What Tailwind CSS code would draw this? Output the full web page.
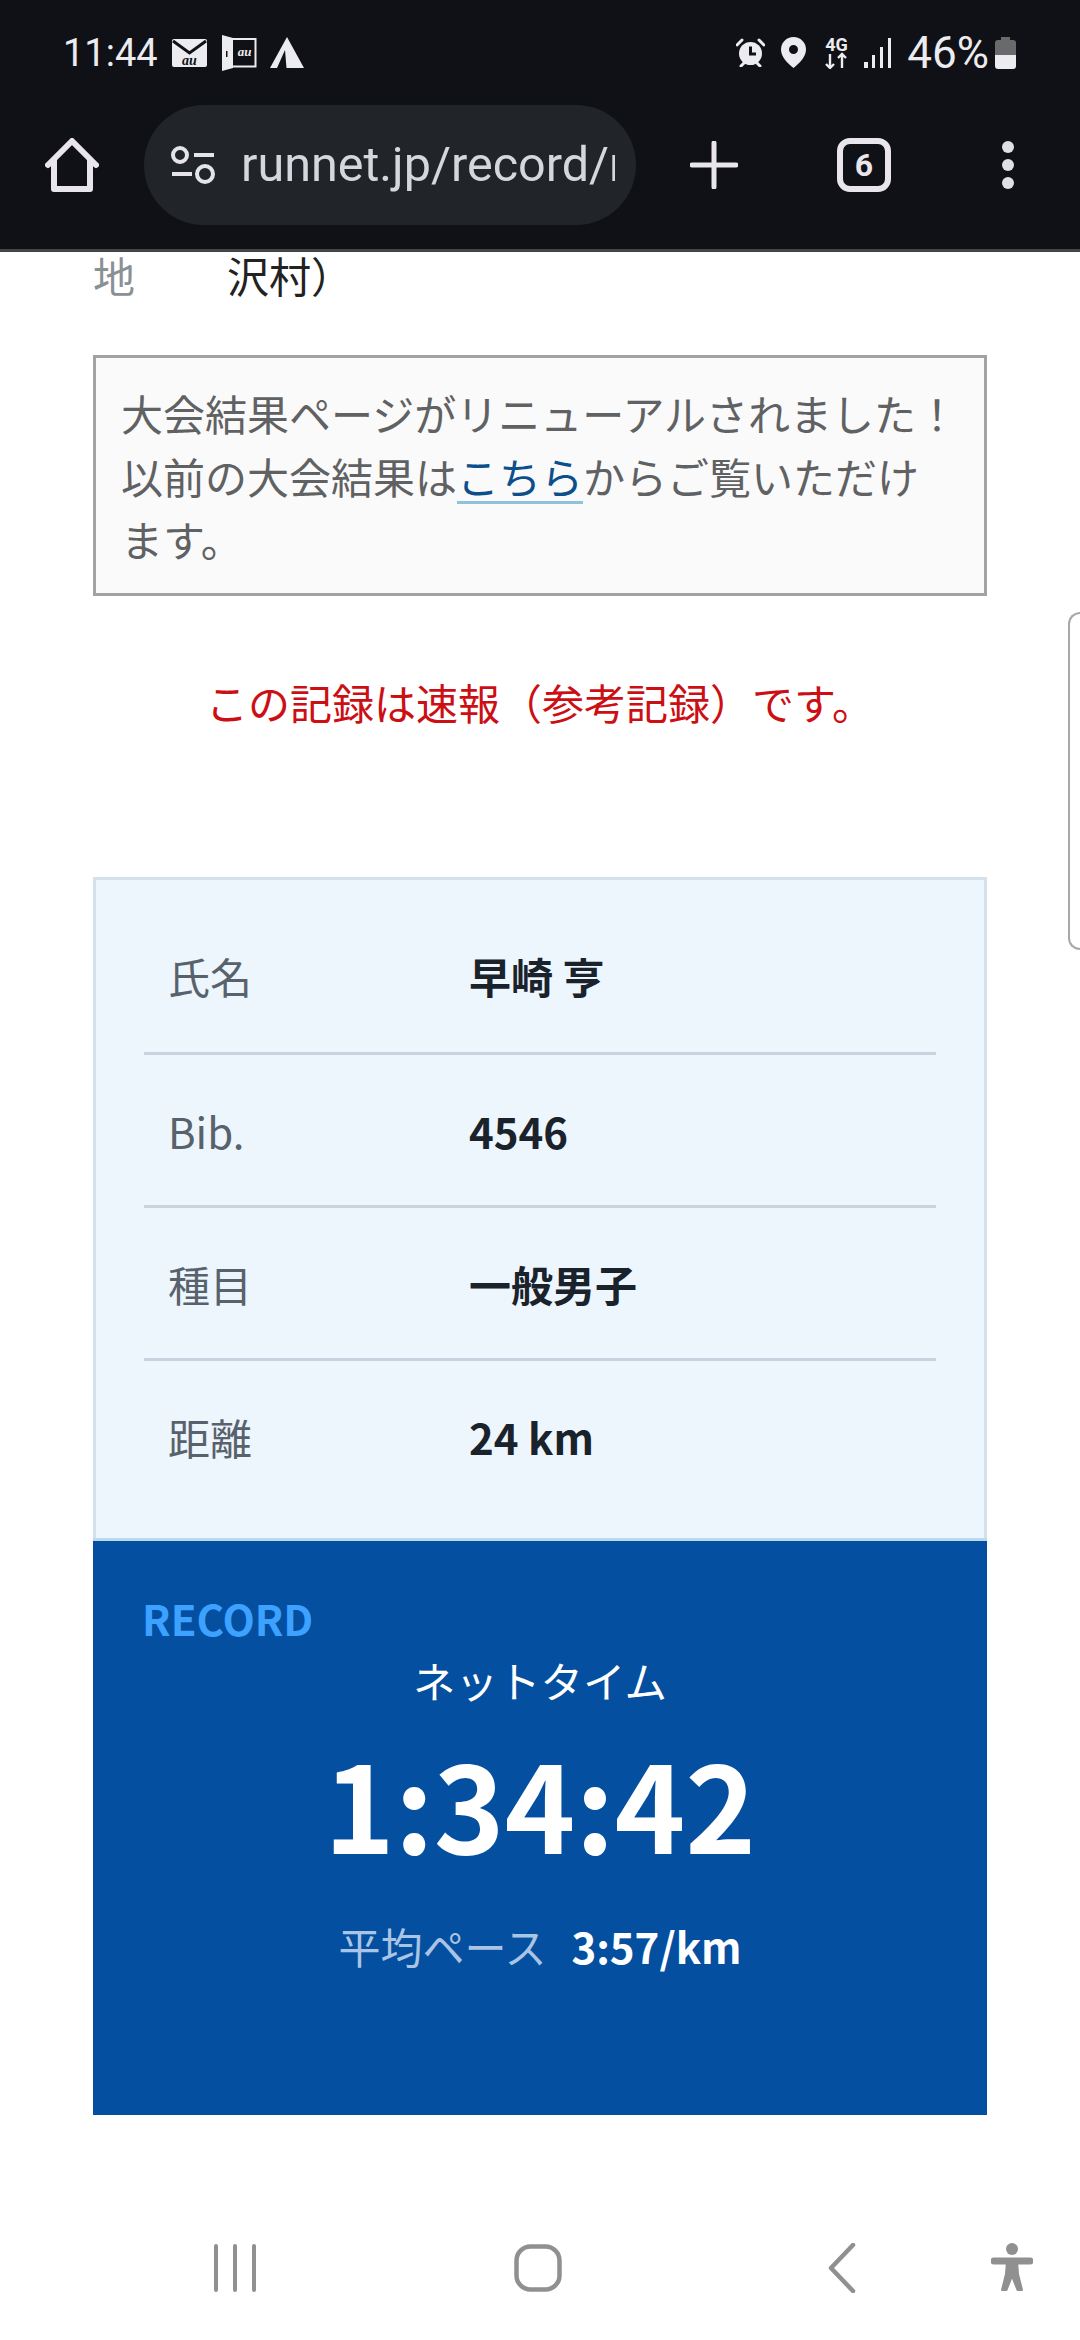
<!DOCTYPE html>
<html lang="ja">
<head>
  <meta charset="UTF-8" />
  <meta name="viewport" content="width=device-width, initial-scale=1.0"/>
  <title>大会結果</title>
  <script src="https://cdn.jsdelivr.net/npm/@tailwindcss/browser@4"></script>
</head>
<body class="relative flex h-[2340px] w-[1080px] flex-col overflow-hidden bg-white font-['Noto_Sans_CJK_JP','Noto_Sans',sans-serif]">

  <!-- Browser chrome -->
  <header class="shrink-0 border-b-[3px] border-[#454545] bg-[#101116] font-['Roboto',sans-serif] text-[#ececf0]">
    <!-- Status bar -->
    <div class="flex h-[105px] items-center justify-between pl-[63px] pr-[64px]">
      <div class="flex items-center">
        <span class="text-[38px] leading-none">11:44</span>
        <svg class="ml-[14px]" width="35" height="28" viewBox="0 0 35 28"><path d="M2 0H33a2 2 0 0 1 2 2V26a2 2 0 0 1-2 2H2a2 2 0 0 1-2-2V2a2 2 0 0 1 2-2Z" fill="#ececf0"/><path d="M1 2 17.500 14 34 2" fill="none" stroke="#101116" stroke-width="3"/><text x="17.500" y="26" text-anchor="middle" font-family="Liberation Serif" font-style="italic" font-weight="700" font-size="14" fill="#101116">au</text></svg>
        <svg class="ml-[15px]" width="35" height="36" viewBox="0 0 35 36"><path d="M0 0 11 3V33L0 36Z" fill="#ececf0"/><path d="M11 4H33.500V31.500H11" fill="none" stroke="#ececf0" stroke-width="2"/><rect x="4" y="16" width="1.500" height="6" fill="#101116"/><text x="22.500" y="21" text-anchor="middle" font-family="Liberation Serif" font-style="italic" font-weight="700" font-size="13" fill="#ececf0">au</text></svg>
        <svg class="ml-[13px]" width="34" height="31" viewBox="0 0 34 31"><path d="M17 0 34 31H16.500L15 13 7 31H0Z" fill="#ececf0"/></svg>
      </div>
      <div class="flex items-center">
        <svg width="29" height="29" viewBox="0 0 29 29"><circle cx="14.500" cy="15.500" r="11.500" fill="#ececf0"/><path d="M1 7 6 2M23 2 28 7M5 28l3-3M24 28l-3-3" stroke="#ececf0" stroke-width="3" stroke-linecap="round"/><path d="M14.500 8.500V16H20" fill="none" stroke="#101116" stroke-width="3"/></svg>
        <svg class="ml-[16px]" width="25" height="31" viewBox="0 0 25 31"><path fill-rule="evenodd" d="M12.500 0C19.500 0 25 5.500 25 12.500 25 20 18 26.500 12.500 31 7 26.500 0 20 0 12.500 0 5.500 5.500 0 12.500 0Zm0 8a4.500 4.500 0 1 0 0 9 4.500 4.500 0 0 0 0-9Z" fill="#ececf0"/></svg>
        <svg class="ml-[18px]" width="25" height="33" viewBox="0 0 25 33"><text x="12.500" y="15" text-anchor="middle" font-family="Roboto" font-weight="700" font-size="18" fill="#ececf0">4G</text><path d="M6 18V32M2 28l4 4 4-4M18 32V18M14 22l4-4 4 4" fill="none" stroke="#ececf0" stroke-width="2.400"/></svg>
        <svg class="ml-[15px]" width="28" height="30" viewBox="0 0 28 30"><g fill="#ececf0"><rect x="0" y="24" width="4" height="6"/><rect x="8" y="17" width="3" height="13"/><rect x="16" y="9" width="3" height="21"/><rect x="24" y="0" width="3" height="30"/></g></svg>
        <span class="ml-[15px] text-[44px] leading-none">46%</span>
        <svg class="ml-[6px]" width="21" height="32" viewBox="0 0 21 32"><path d="M6 0H15V3H18a3 3 0 0 1 3 3V18H0V6a3 3 0 0 1 3-3H6Z" fill="#6a6a6c"/><path d="M0 18H21V29a3 3 0 0 1-3 3H3a3 3 0 0 1-3-3Z" fill="#ececf0"/></svg>
      </div>
    </div>

    <!-- Address bar -->
    <div class="flex h-[120px] items-center pl-[45px]">
      <svg width="54" height="54" viewBox="0 0 54 54"><path d="M3 27 27 3 51 27M9 22V51H45V22" fill="none" stroke="#e8e6ec" stroke-width="6" stroke-linecap="round" stroke-linejoin="round"/></svg>
      <div class="ml-[45px] flex h-[120px] w-[492px] items-center rounded-full bg-[#212429] pl-[26px]">
        <svg width="46" height="40" viewBox="0 0 46 40"><g fill="none" stroke="#e4e4ea" stroke-width="4"><circle cx="10" cy="10" r="7"/><circle cx="35" cy="29" r="8"/><path d="M24 10H44M2 29H22"/></g></svg>
        <div class="ml-[25px] w-[374px] overflow-hidden whitespace-nowrap text-[48.500px] leading-[60px] text-[#d6d7dd]">runnet.jp/record/race</div>
      </div>
      <svg class="ml-[54px]" width="48" height="48" viewBox="0 0 48 48"><path d="M24 2V46M2 24H46" stroke="#e8e6ec" stroke-width="5" stroke-linecap="round"/></svg>
      <div class="ml-[99px] flex h-[54px] w-[54px] items-center justify-center rounded-[13px] border-[6px] border-[#e8e6ec] text-[32px] font-bold leading-none text-[#e8e6ec]">6</div>
      <div class="ml-[111px] flex flex-col gap-[6px]">
        <span class="size-[12px] rounded-full bg-[#e0dfe4]"></span>
        <span class="size-[12px] rounded-full bg-[#e0dfe4]"></span>
        <span class="size-[12px] rounded-full bg-[#e0dfe4]"></span>
      </div>
    </div>
    <div class="h-[24px]"></div>
  </header>

  <!-- Page content -->
  <main class="min-h-0 flex-1 overflow-hidden px-[93px]">
    <div class="flex text-[42px] leading-[46px]">
      <span class="w-[134px] text-[#8a9194]">地</span>
      <span class="text-[#222]">沢村）</span>
    </div>

    <div class="mt-[57px] border-[3px] border-[#a3a3a3] bg-[#fafafa] py-[23px] pl-[25px] pr-[20px] text-[42px] leading-[63px] text-[#5f6163]">
      大会結果ページがリニューアルされました！<br>以前の大会結果は<a href="#" class="text-[#0b4f8c] underline decoration-[#8fc3dc] decoration-[3px] underline-offset-[7px]">こちら</a>からご覧いただけ<br>ます。
    </div>

    <p class="mt-[82px] text-center text-[42px] leading-[48px] text-[#cc0f14]">この記録は速報（参考記録）です。</p>

    <section class="mt-[151px]">
      <dl class="border-[3px] border-b-0 border-[#d3e1ec] bg-[#edf5fd] px-[48px] pt-[1px] text-[42px]">
        <div class="flex h-[174px] items-center border-b-[3px] border-[#c9d3e0] pl-[24px] pt-[18px]">
          <dt class="w-[301px] text-[#58626c]">氏名</dt>
          <dd class="font-bold text-[#1a222b]">早崎 亨</dd>
        </div>
        <div class="flex h-[153px] items-center border-b-[3px] border-[#c9d3e0] pl-[24px]">
          <dt class="w-[301px] text-[#58626c]">Bib.</dt>
          <dd class="font-bold text-[#1a222b]">4546</dd>
        </div>
        <div class="flex h-[153px] items-center border-b-[3px] border-[#c9d3e0] pl-[24px]">
          <dt class="w-[301px] text-[#58626c]">種目</dt>
          <dd class="font-bold text-[#1a222b]">一般男子</dd>
        </div>
        <div class="flex h-[177px] items-center pb-[27px] pl-[24px]">
          <dt class="w-[301px] text-[#58626c]">距離</dt>
          <dd class="font-bold text-[#1a222b]">24 km</dd>
        </div>
      </dl>

      <div class="h-[577px] border-t-[3px] border-[#bcd9f0] bg-[#044fa0] pt-[53px] text-white">
        <div class="pl-[49px] text-[42px] font-bold leading-[48px] text-[#3ca1ff]">RECORD</div>
        <div class="mt-[14px] text-center text-[42.500px] leading-[48px]">ネットタイム</div>
        <div class="mt-[38px] text-center text-[120px] font-bold leading-[120px]">1:34:42</div>
        <div class="mt-[60px] flex items-center justify-center text-[42px] leading-[48px]">
          <span class="text-[#a9c4e4]">平均ペース</span>
          <span class="ml-[25px] font-bold">3:57/km</span>
        </div>
      </div>
    </section>
  </main>

  <!-- Android navigation bar -->
  <nav class="relative flex h-[166px] shrink-0 items-center bg-white pl-[214px] pt-[22px]">
    <svg width="42" height="48" viewBox="0 0 42 48"><path d="M2 2V46M21 2V46M40 2V46" stroke="#909090" stroke-width="4" stroke-linecap="round"/></svg>
    <svg class="ml-[258px]" width="48" height="48" viewBox="0 0 48 48"><rect x="2.500" y="2.500" width="43" height="43" rx="14" fill="none" stroke="#909090" stroke-width="4.500"/></svg>
    <svg class="ml-[266px]" width="28" height="50" viewBox="0 0 28 50"><path d="M25 2 3 25 25 48" fill="none" stroke="#909090" stroke-width="4.500" stroke-linecap="round" stroke-linejoin="round"/></svg>
    <svg class="ml-[135px]" width="42" height="50" viewBox="0 0 42 50"><ellipse cx="21" cy="6" rx="6" ry="6" fill="#909090"/><path d="M3 18H39" stroke="#909090" stroke-width="7" stroke-linecap="round"/><path d="M16 18H26L27 31 31 47H26.500L21 33 15.500 47H11L15 31Z" fill="#909090" stroke="#909090" stroke-width="2" stroke-linejoin="round"/></svg>
  </nav>

  <!-- Edge panel handle -->
  <div class="absolute right-0 top-[612px] h-[338px] w-[12px] rounded-l-[12px] border-y-[2px] border-l-[2px] border-[#a8a8a8] bg-white"></div>
</body>
</html>
